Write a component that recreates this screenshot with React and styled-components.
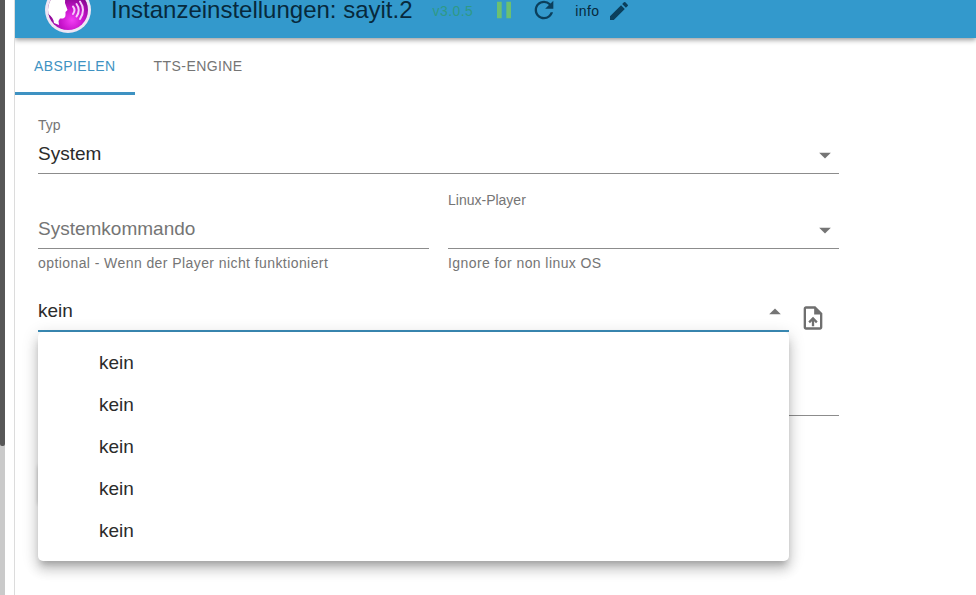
import { useState } from "react";
import styled, { createGlobalStyle } from "styled-components";
import {
  MdPause,
  MdRefresh,
  MdEdit,
  MdArrowDropDown,
  MdArrowDropUp,
  MdOutlineUploadFile,
} from "react-icons/md";

const SOUNDS = ["kein", "kein", "kein", "kein", "kein"];

const SayItLogo = () => (
  <svg width="48" height="48" viewBox="0 0 48 48" aria-hidden="true">
    <defs>
      <radialGradient id="ball" cx="0.6" cy="0.75" r="0.7">
        <stop offset="0" stopColor="#f23df4" />
        <stop offset="0.4" stopColor="#c814cc" />
        <stop offset="1" stopColor="#6d0079" />
      </radialGradient>
      <clipPath id="ballClip">
        <circle cx="24" cy="24" r="20" />
      </clipPath>
    </defs>
    <circle cx="24" cy="24" r="23" fill="#eee6f5" />
    <circle cx="24" cy="24" r="20" fill="url(#ball)" />
    <g clipPath="url(#ballClip)">
      <path
        d="M3 2H18C20 6 21.500 11 21 17L23.500 24L21.500 26L21.500 29C21.500 32 19 33 16 32.500L14.500 35L15 39L10 37C10 33 7 30 3 27Z"
        fill="#fff"
      />
      <g fill="none" stroke="#f6cffb" strokeWidth="2" strokeLinecap="round">
        <path d="M29 20.500Q32 24 29 28" />
        <path d="M32.500 18Q37 24 32.500 30.500" />
        <path d="M36 15.500Q42 24 36 33" />
      </g>
    </g>
  </svg>
);

function App() {
  const [tab, setTab] = useState(0);
  const [open, setOpen] = useState(true);
  const [command, setCommand] = useState("");

  return (
    <Page>
      <GlobalStyle />
      <ScrollTrack>
        <ScrollThumb />
      </ScrollTrack>
      <Panel>
        <Header>
          <SayItLogo />
          <Title>Instanzeinstellungen: sayit.2</Title>
          <Version>v3.0.5</Version>
          <Actions>
            <IconButton $color="#6cc070" aria-label="Pause">
              <MdPause size={28} />
            </IconButton>
            <IconButton $color="#0b3f5c" aria-label="Neu laden">
              <MdRefresh size={28} />
            </IconButton>
          </Actions>
          <LogLevel>
            info
            <IconButton $color="#0b3f5c" aria-label="Bearbeiten">
              <MdEdit size={24} />
            </IconButton>
          </LogLevel>
        </Header>

        <Tabs role="tablist">
          {["Abspielen", "TTS-Engine"].map((name, i) => (
            <Tab
              key={name}
              role="tab"
              aria-selected={tab === i}
              $active={tab === i}
              onClick={() => setTab(i)}
            >
              {name}
            </Tab>
          ))}
        </Tabs>

        <Form onSubmit={(e) => e.preventDefault()}>
          <Field>
            <Label htmlFor="type">Typ</Label>
            <SelectBox>
              <Select id="type" defaultValue="system">
                <option value="system">System</option>
              </Select>
              <MdArrowDropDown size={28} />
            </SelectBox>
          </Field>

          <Columns>
            <Field>
              <Label htmlFor="command">&nbsp;</Label>
              <Input
                id="command"
                aria-label="Systemkommando"
                placeholder="Systemkommando"
                value={command}
                onChange={(e) => setCommand(e.target.value)}
              />
              <Helper>optional - Wenn der Player nicht funktioniert</Helper>
            </Field>
            <Field>
              <Label htmlFor="player">Linux-Player</Label>
              <SelectBox>
                <Select id="player" defaultValue="">
                  <option value=""></option>
                </Select>
                <MdArrowDropDown size={28} />
              </SelectBox>
              <Helper>Ignore for non linux OS</Helper>
            </Field>
          </Columns>

          <SoundRow>
            <MenuAnchor>
              <SelectBox $focused>
                <Select
                  aria-label="Ansage"
                  defaultValue="kein"
                  onMouseDown={(e) => {
                    e.preventDefault();
                    setOpen(!open);
                  }}
                >
                  <option value="kein">kein</option>
                </Select>
                {open ? <MdArrowDropUp size={28} /> : <MdArrowDropDown size={28} />}
              </SelectBox>
              {open && (
                <Menu role="listbox">
                  {SOUNDS.map((sound, i) => (
                    <MenuItem key={i} role="option" onClick={() => setOpen(false)}>
                      {sound}
                    </MenuItem>
                  ))}
                </Menu>
              )}
            </MenuAnchor>
            <IconButton $color="#6f6f6f" aria-label="Datei hochladen">
              <MdOutlineUploadFile size={28} />
            </IconButton>
          </SoundRow>

          <HiddenRow>
            <Input aria-label="Lautstärke" />
          </HiddenRow>
          <TestButton aria-label="Testen" />
        </Form>
      </Panel>
    </Page>
  );
}

export default App;

const GlobalStyle = createGlobalStyle`
  * {
    box-sizing: border-box;
  }
  body {
    margin: 0;
    overflow: hidden;
    background: #fff;
    font-family: "Liberation Sans", Arial, sans-serif;
    color: #2b2b2b;
  }
  button, input, select {
    font-family: inherit;
  }
`;

const Page = styled.div`
  display: flex;
  gap: 9px;
  height: 100vh;
`;

const ScrollTrack = styled.div`
  width: 5px;
  flex-shrink: 0;
  background: #cacaca;
`;

const ScrollThumb = styled.div`
  height: 75%;
  border-radius: 0 0 2px 2px;
  background: #575757;
`;

const Panel = styled.main`
  flex: 1;
  min-width: 0;
  border-left: 1px solid #dcdcdc;
`;

/* the toolbar is partly scrolled out of view */
const Header = styled.header`
  display: flex;
  align-items: center;
  height: 56px;
  margin-top: -18px;
  padding-left: 29px;
  background: #3399cc;
  box-shadow: 0 2px 5px rgba(0, 0, 0, 0.4);
  clip-path: inset(0 0 -12px 0);
`;

const Title = styled.h1`
  margin: 0 20px 0 19px;
  font-size: 24px;
  font-weight: 400;
  line-height: 24px;
  white-space: nowrap;
  color: #07293c;
`;

const Version = styled.span`
  padding-top: 2px;
  font-size: 14px;
  letter-spacing: 0.03em;
  color: #2f9a86;
`;

const Actions = styled.div`
  display: flex;
  gap: 12px;
  margin: 0 17px;
`;

const LogLevel = styled.div`
  display: flex;
  align-items: center;
  gap: 8px;
  padding-top: 2px;
  font-size: 14px;
  letter-spacing: 0.03em;
  color: #07293c;
`;

const IconButton = styled.button`
  display: flex;
  padding: 0;
  border: none;
  background: none;
  cursor: pointer;
  color: ${(props) => props.$color};
`;

const Tabs = styled.div`
  display: flex;
  height: 57px;
`;

const Tab = styled.button`
  padding: 2px 19px 0;
  border: none;
  border-bottom: 3px solid ${(props) => (props.$active ? "#3e92c2" : "transparent")};
  background: none;
  font-size: 14px;
  letter-spacing: 0.03em;
  text-transform: uppercase;
  cursor: pointer;
  color: ${(props) => (props.$active ? "#3e92c2" : "#757575")};
`;

const Form = styled.form`
  display: flex;
  flex-direction: column;
  max-width: 847px;
  padding: 20px 23px;
`;

const Field = styled.div`
  display: flex;
  flex-direction: column;
  min-width: 0;
`;

const Label = styled.label`
  font-size: 14px;
  line-height: 20px;
  color: #757575;
`;

const Helper = styled.p`
  margin: 4px 0 0;
  font-size: 14px;
  line-height: 20px;
  letter-spacing: 0.03em;
  color: #757575;
`;

const Input = styled.input`
  width: 100%;
  height: 39px;
  padding: 0;
  border: none;
  border-bottom: 1px solid #8c8c8c;
  outline: none;
  background: transparent;
  font-size: 19px;
  color: #2b2b2b;
  &::placeholder {
    color: #757575;
    opacity: 1;
  }
`;

const SelectBox = styled.div`
  display: grid;
  align-items: center;
  border-bottom: ${(props) => (props.$focused ? "2px solid #3b8db8" : "1px solid #8c8c8c")};
  svg {
    grid-area: 1 / 1;
    justify-self: end;
    margin-top: 2px;
    pointer-events: none;
    color: #757575;
  }
`;

const Select = styled.select`
  grid-area: 1 / 1;
  width: 100%;
  height: 38px;
  padding: 0 0 1px;
  border: none;
  outline: none;
  appearance: none;
  background: transparent;
  font-size: 19px;
  color: #2b2b2b;
`;

const Columns = styled.div`
  display: grid;
  grid-template-columns: 1fr 1fr;
  gap: 19px;
  margin-top: 16px;
`;

const SoundRow = styled.div`
  display: grid;
  grid-template-columns: 1fr 28px;
  align-items: end;
  gap: 10px;
  margin-top: 19px;
  padding-right: 12px;
`;

const MenuAnchor = styled.div`
  position: relative;
`;

const Menu = styled.ul`
  position: absolute;
  z-index: 1;
  top: 100%;
  left: 0;
  right: 0;
  margin: 0;
  padding: 10px 0 9px;
  list-style: none;
  border-radius: 5px;
  background: #fff;
  box-shadow:
    0 6px 6px -3px rgba(0, 0, 0, 0.2),
    0 9px 12px 1px rgba(0, 0, 0, 0.14),
    0 3px 16px 2px rgba(0, 0, 0, 0.12);
`;

const MenuItem = styled.li`
  padding: 7px 19px 7px 61px;
  font-size: 19px;
  line-height: 28px;
  cursor: pointer;
`;

const HiddenRow = styled.div`
  margin-top: 45px;
`;

const TestButton = styled.button`
  align-self: flex-start;
  width: 120px;
  height: 42px;
  margin-top: 47px;
  border: none;
  border-radius: 5px;
  background: #e0e0e0;
  box-shadow: 0 1px 4px rgba(0, 0, 0, 0.2);
`;
